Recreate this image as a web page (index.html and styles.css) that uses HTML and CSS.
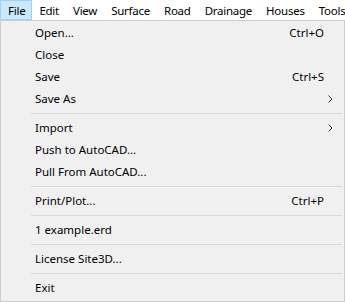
FILE: index.html
```html
<!DOCTYPE html>
<html lang="en">
<head>
    <meta charset="UTF-8">
    <title>File menu</title>
    <link rel="stylesheet" href="styles.css">
</head>
<body>
    <div class="menubar">
        <span class="menubar-item active">File</span>
        <span class="menubar-item">Edit</span>
        <span class="menubar-item">View</span>
        <span class="menubar-item">Surface</span>
        <span class="menubar-item">Road</span>
        <span class="menubar-item">Drainage</span>
        <span class="menubar-item">Houses</span>
        <span class="menubar-item">Tools</span>
    </div>

    <div class="dropdown">
        <div class="item"><span class="label">Open...</span><span class="shortcut">Ctrl+O</span><span class="sub"></span></div>
        <div class="item"><span class="label">Close</span><span class="shortcut"></span><span class="sub"></span></div>
        <div class="item"><span class="label">Save</span><span class="shortcut">Ctrl+S</span><span class="sub"></span></div>
        <div class="item"><span class="label">Save As</span><span class="shortcut"></span><span class="sub"><svg width="5" height="8" viewBox="0 0 5 8"><polyline points="0.5,0.5 4,4 0.5,7.5" fill="none" stroke="#333" stroke-width="1"/></svg></span></div>
        <div class="separator"></div>
        <div class="item"><span class="label">Import</span><span class="shortcut"></span><span class="sub"><svg width="5" height="8" viewBox="0 0 5 8"><polyline points="0.5,0.5 4,4 0.5,7.5" fill="none" stroke="#333" stroke-width="1"/></svg></span></div>
        <div class="item"><span class="label">Push to AutoCAD...</span><span class="shortcut"></span><span class="sub"></span></div>
        <div class="item"><span class="label">Pull From AutoCAD...</span><span class="shortcut"></span><span class="sub"></span></div>
        <div class="separator"></div>
        <div class="item"><span class="label">Print/Plot...</span><span class="shortcut">Ctrl+P</span><span class="sub"></span></div>
        <div class="separator"></div>
        <div class="item"><span class="label">1 example.erd</span><span class="shortcut"></span><span class="sub"></span></div>
        <div class="separator"></div>
        <div class="item"><span class="label">License Site3D...</span><span class="shortcut"></span><span class="sub"></span></div>
        <div class="separator"></div>
        <div class="item"><span class="label">Exit</span><span class="shortcut"></span><span class="sub"></span></div>
    </div>
</body>
</html>
```

FILE: styles.css
```css
body {
    margin: 0;
    font-family: 'Noto Sans', sans-serif;
    font-size: 11.5px;
    color: #000;
    background: #fff;
    overflow: hidden;
}

.menubar {
    display: flex;
    height: 20px;
    background: #fff;
    white-space: nowrap;
    letter-spacing: -0.25px;
}

.menubar-item {
    display: flex;
    align-items: center;
    padding: 0 6px;
    border: 1px solid transparent;
    box-sizing: border-box;
    height: 20px;
}

.menubar-item.active {
    background: #cce8ff;
    border-color: #99d1ff;
    padding-left: 7px;
}

.dropdown {
    border: 1px solid #cccccc;
    background: #f0f0f0;
    padding: 1px 0 0 0;
    height: 282px;
    box-sizing: border-box;
}

.item {
    display: flex;
    align-items: center;
    height: 22px;
    padding-left: 34px;
    padding-right: 8px;
    padding-bottom: 1px;
    box-sizing: border-box;
}

.label {
    flex: 1;
}

.shortcut {
    text-align: right;
}

.sub {
    width: 12px;
    display: flex;
    justify-content: center;
    align-items: center;
}

.separator {
    height: 1px;
    margin: 3px 2px 3px 30px;
    background: #d7d7d7;
}
```
